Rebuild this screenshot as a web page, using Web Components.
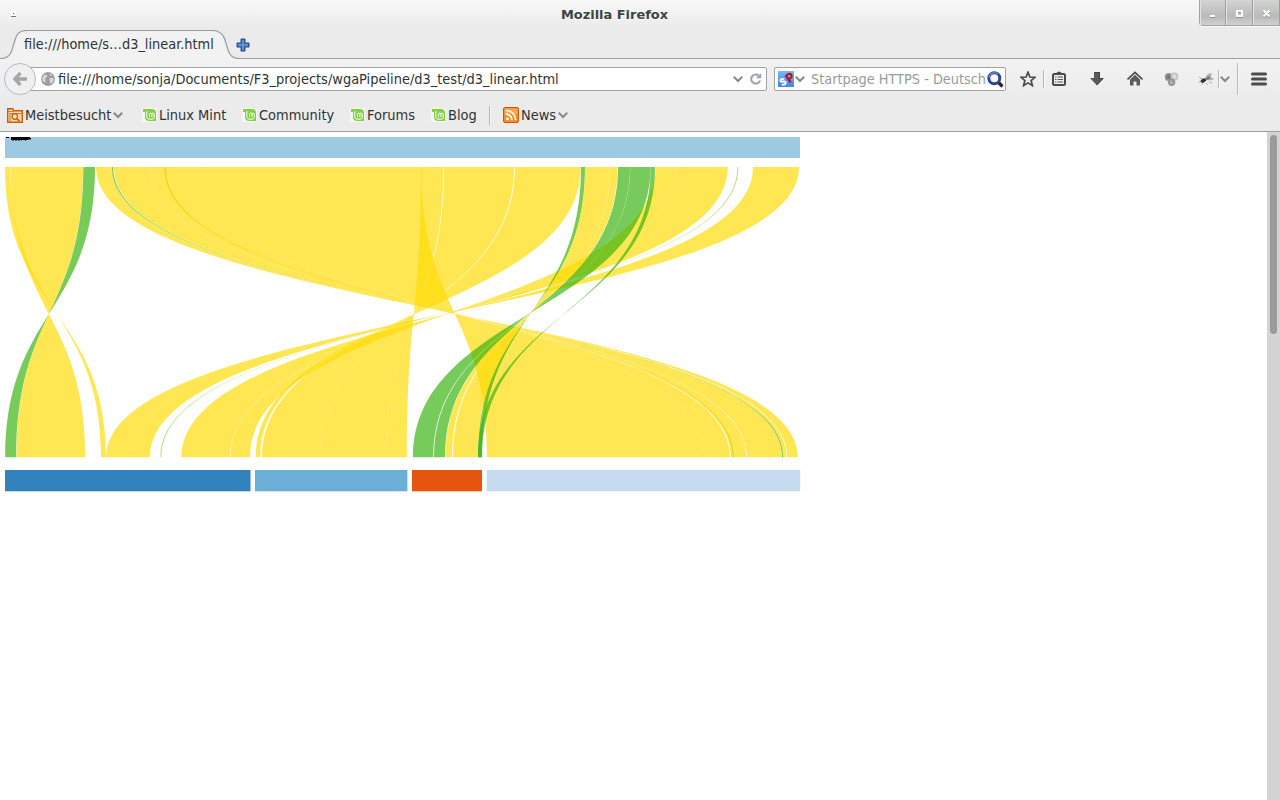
<!DOCTYPE html>
<html lang="de">
<head>
<meta charset="utf-8">
<title>Mozilla Firefox</title>
<style>
html,body{margin:0;height:100%;overflow:hidden}
body{font:14.45px/18px "DejaVu Sans Condensed","DejaVu Sans",sans-serif;color:#2e3436;background:#ebebeb}
</style>
</head>
<body>
<browser-window>
  <title-bar>Mozilla Firefox</title-bar>
  <tab-strip>file:///home/s…d3_linear.html</tab-strip>
  <nav-bar></nav-bar>
  <bookmark-bar>
    <bookmark-item icon="folder" menu style="--label:88px;margin-right:19px">Meistbesucht</bookmark-item>
    <bookmark-item icon="mint" style="--label:69px;margin-right:14px">Linux Mint</bookmark-item>
    <bookmark-item icon="mint" style="--label:76px;margin-right:15px">Community</bookmark-item>
    <bookmark-item icon="mint" style="--label:49px;margin-right:15px">Forums</bookmark-item>
    <bookmark-item icon="mint" style="--label:30px;margin-right:11px">Blog</bookmark-item>
    <bar-line style="--h:19px;margin-right:13px"></bar-line>
    <bookmark-item icon="rss" menu style="--gap:2px;--label:37px">News</bookmark-item>
  </bookmark-bar>
  <page-view><linear-chart></linear-chart></page-view>
</browser-window>
<script>
const ICONS = {
  folder: [16,16,`<path d="M.7 15.3V1.7h5l1 2h8.600v11.600z" fill="#f9d9b6" stroke="#ce5c00" stroke-width="1.400"/><path d="M1 4.500h6M3 15V6.500h12" fill="none" stroke="#e07b28" stroke-width="1.200"/><circle cx="7.800" cy="9.600" r="2.700" fill="#fff0dd" stroke="#ce5c00" stroke-width="1.300"/><path d="M9.800 11.800l2.700 2.400" stroke="#ce5c00" stroke-width="1.700"/>`],
  mint: [15,14,`<path d="M0 0h15v14H0z" fill="#f6f6f6"/><path d="M1 1h9c2.500 0 4 1.500 4 3.800V13H7.200c-2.700 0-4.200-1.500-4.200-4V4H1z" fill="#86cf43"/><path d="M4.800 3.200v5.500c0 1.500.8 2.400 2.200 2.400h3c1.500 0 2.200-.8 2.200-2.200V6.300c0-1.700-2.300-1.700-2.300 0v2.800M9.900 6.300c0-1.700-2.400-1.700-2.400 0v2.800" fill="none" stroke="#fff" stroke-width="1"/>`],
  rss: [16,16,`<rect x=".5" y=".5" width="15" height="15" rx="1.500" fill="#f78b1f" stroke="#d45500"/><path d="M1.500 1.500h13v6q-6-2-13 1z" fill="#fba64b"/><circle cx="4.500" cy="11.700" r="1.500" fill="#fff"/><path d="M3 7.200a6 6 0 0 1 6 6M3 3.500a9.700 9.700 0 0 1 9.700 9.700" fill="none" stroke="#fff" stroke-width="1.700"/>`],
  chevron: [10,8,`<path d="M.8 1.800L5 6l4.200-4.200" fill="none" stroke="#888a86" stroke-width="2"/>`],
  globe: [14,14,`<circle cx="7" cy="7" r="6.900" fill="#9e9e9e"/><path d="M1.500 5l2.500-2.500 2 .5.300 1.500L4 6.500l.8 2.500-1 1.500Q1.500 9.500 1.300 7zM8.500 1.500l3 1.500-2 1zM8.300 6.500l3.500-.800 1 1.800-1.300 3-1.700 1.200-1-2.500z" fill="#dadada"/>`],
  reload: [12,12,`<path d="M10 7.500A4.500 4.500 0 1 1 8.600 2.600" fill="none" stroke="#97a3b2" stroke-width="2"/><path d="M11.200 0v5.300H5.900z" fill="#97a3b2"/>`],
  search: [17,17,`<path d="M11 11l4.500 4.500" stroke="#222" stroke-width="3.200"/><circle cx="7.300" cy="7.300" r="5.500" fill="#f4f6fb" stroke="#2c4595" stroke-width="3"/><path d="M2 7a5.400 5.400 0 0 1 9-4" fill="none" stroke="#6a8ad0" stroke-width="1.200"/>`],
  star: [16,16,`<path d="M8 1.200l1.900 4.800 5.100.300-3.900 3.300 1.300 5L8 11.900l-4.400 2.700 1.300-5L1 6.300 6.100 6z" fill="none" stroke="#4a4a4a" stroke-width="1.700"/>`],
  list: [16,16,`<path d="M5 3Q5.500.500 8 .5T11 3z" fill="#4d4d4d"/><rect x="2" y="3" width="12" height="11" rx="1.300" fill="none" stroke="#4a4a4a" stroke-width="2"/><path d="M4 6h1.500M6.500 6h5.500M4 8.500h1.500M6.500 8.500h5.500M4 11h1.500M6.500 11h5.500" stroke="#555" stroke-width="1.200"/>`],
  down: [16,16,`<path d="M5 1h6v6h4l-7 7.500L1 7h4z" fill="#595959"/><path d="M5.500 1.500h5v6h3.300L8 13.800" fill="none" stroke="#444"/>`],
  home: [16,16,`<path d="M.5 8.500L8 1.500l7.500 7" fill="none" stroke="#4b4b4b" stroke-width="1.700"/><path d="M3 8.500l5-4.700 5 4.700V14.500H9.500v-4h-3v4H3z" fill="#5c5c5c"/>`],
  balls: [15,15,`<circle cx="4.800" cy="5" r="4" fill="#8f8f8f"/><circle cx="10.400" cy="4.500" r="4" fill="#c3c3c3"/><circle cx="7.600" cy="10.300" r="3.700" fill="#969696"/><circle cx="4.800" cy="5" r="2" fill="#777"/><circle cx="10.500" cy="4.400" r="2" fill="#ddd"/><circle cx="7.500" cy="10.500" r="1.800" fill="#b0b0b0"/>`],
  fly: [17,15,`<path d="M8 7q-1-5 5-6 3 3-5 6zM9 8q5-4 7-1-2 2-7 1z" fill="#b5b5b5"/><path d="M1 5l4 2.500M.5 10l4-.500M4 13l1-3M8 11l2 2M11 9.500l3 2" stroke="#a5a5a5" stroke-width=".9"/><ellipse cx="5.500" cy="8.500" rx="3" ry="1.900" transform="rotate(-25 5.500 8.500)" fill="#333"/><ellipse cx="10" cy="6.200" rx="3" ry="1.500" transform="rotate(-25 10 6.200)" fill="#7c7c7c"/>`],
  menu: [16,14,`<path d="M1.500 2h13M1.500 7h13M1.500 12h13" stroke="#4c4c4c" stroke-width="3" stroke-linecap="round"/>`],
  engine: [16,16,`<defs><linearGradient id="e" y2="1" x2="0"><stop stop-color="#79b8f8"/><stop offset="1" stop-color="#3d87ef"/></linearGradient></defs><path d="M0 0h16v16H0z" fill="url(#e)"/><path d="M6.200 8.200C4 7.200 1.800 9 2.800 10.300c1 1.200 3.700-.6 4.700.8.800 1.500-1.200 3.300-3.700 2.300" fill="none" stroke="#fff" stroke-width="1.900"/><path d="M7.500 4.500l5.300 7M8 5.200c1-2.200 4-3.200 5.200-1.600 1.200 1.700-.2 3.900-2.700 4.600" fill="none" stroke="#b8141c" stroke-width="2.200"/>`],
  plus: [14,14,`<path d="M5.200 1.200h3.600v4h4v3.600h-4v4H5.200v-4h-4V5.200h4z" fill="#5f93d0" stroke="#204a87" stroke-width="1.300" stroke-linejoin="round"/>`],
  back: [14,14,`<path d="M7.500 1L1.800 7l5.700 6M2 7h12" fill="none" stroke="#a6a6a6" stroke-width="3.400"/>`]
};
const define = (name, css, html) => customElements.define(name, class extends HTMLElement {
  constructor(){ super(); this.attachShadow({mode:'open'}); }
  connectedCallback(){ this.shadowRoot.innerHTML = `<style>${css}</style>` + (typeof html === 'function' ? html(this) : html); }
});

define('ui-icon', `:host{display:block;flex:none}svg{display:block}`, el => {
  const [w,h,body] = ICONS[el.getAttribute('name')];
  return `<svg width="${w}" height="${h}" viewBox="0 0 ${w} ${h}">${body}</svg>`;
});
define('bar-line', `:host{display:block;flex:none;width:1px;height:var(--h,18px);background:#b8b8b8;box-shadow:1px 0 #f8f8f8}`, '');
define('browser-window', `:host{display:flex;flex-direction:column;height:800px;width:1280px;background:linear-gradient(#f8f8f8,#ebebeb 28px)}`, '<slot></slot>');

define('title-bar', `
:host{display:grid;grid-template-columns:80px 1fr 81px;height:30px;flex:none}
.dot{width:5px;height:6px;background:#fff;border-bottom:1px solid #777;margin:10px 0 0 11px;display:grid;place-items:center}
.dot i{width:1px;height:1px;background:#555}
.name{text-align:center;font:bold 12.95px/18px "DejaVu Sans",sans-serif;color:#3d4344;text-shadow:0 1px #fff;padding:6px 50px 0 0}
.buttons{display:grid;grid-template-columns:26px 27px 1fr;height:26px;background:linear-gradient(#d3d4d3,#b9bbb9 65%,#cfd0cf);border:1px solid #a2a4a2;border-width:0 0 1px 1px;border-radius:0 0 0 4px;box-shadow:0 1px #fafafa;box-sizing:border-box}
.buttons span{border-left:1px solid #e2e3e2;border-right:1px solid #9fa19f}
svg{display:block;width:100%;height:25px}`,
`<div class="dot"><i></i></div><div class="name"><slot></slot></div>
<div class="buttons"><span><svg viewBox="0 0 24 25"><path d="M9 17h5" stroke="#8d8f8d" stroke-width="2"/><path d="M9 16h5" stroke="#fff" stroke-width="2"/></svg></span>
<span><svg viewBox="0 0 25 25"><path d="M10 12h5v5h-5z" fill="none" stroke="#8d8f8d" stroke-width="2"/><path d="M10 11h5v5h-5z" fill="none" stroke="#fff" stroke-width="2"/></svg></span>
<span><svg viewBox="0 0 24 25"><path d="M9 11.500l6 6m0-6l-6 6" stroke="#8d8f8d" stroke-width="2"/><path d="M9 10.500l6 6m0-6l-6 6" stroke="#fff" stroke-width="2"/></svg></span></div>`);

define('tab-strip', `
:host{display:flex;height:29px;flex:none;background:linear-gradient(#a0a0a0,#a0a0a0) bottom/100% 1px no-repeat}
.tab{display:grid;width:237px}
.tab>*{grid-area:1/1}
.label{padding:5px 0 0 24px;white-space:nowrap;font-size:14.4px}
ui-icon{margin-top:8px;margin-left:-1px}`,
`<div class="tab"><svg width="240" height="29"><path d="M0 28.500C7 28.500 10 26 12 20L15 10C17 3 20 .5 27 .5H212C219 .5 223 3 225 10L228 20C230 26 233 28.500 240 28.500V30H0z" fill="#f2f2f2"/><path d="M0 28.500C7 28.500 10 26 12 20L15 10C17 3 20 .5 27 .5H212C219 .5 223 3 225 10L228 20C230 26 233 28.500 240 28.500" fill="none" stroke="#9b9b9b" stroke-width="1.200"/></svg><div class="label"><slot></slot></div></div><ui-icon name="plus"></ui-icon>`);

define('nav-bar', `
:host{display:flex;align-items:center;height:40px;flex:none;background:linear-gradient(#f2f2f2,#ebebeb)}
.back{width:32px;height:32px;box-sizing:border-box;border:1px solid #b5bcc4;border-radius:50%;background:#f0f0f0;margin-left:4px;display:grid;place-items:center;z-index:1}
.field{display:flex;align-items:center;height:24px;box-sizing:border-box;background:#fff;border:1px solid #a2a2a2;border-radius:2px;white-space:nowrap}
.url{width:743px;margin:0 7px 0 -12px;padding-left:16px;box-sizing:border-box}
.url span{flex:1;padding-left:3px}
.find{width:232px;padding-left:3px;color:#999b99}
.find span{width:176px;margin-left:6px;font-size:14.35px}`,
`<div class="back"><ui-icon name="back"></ui-icon></div>
<div class="field url"><ui-icon name="globe"></ui-icon><span>file:///home/sonja/Documents/F3_projects/wgaPipeline/d3_test/d3_linear.html</span><ui-icon name="chevron" style="margin-right:7px"></ui-icon><ui-icon name="reload" style="margin-right:4px"></ui-icon></div>
<div class="field find"><ui-icon name="engine"></ui-icon><ui-icon name="chevron" style="margin-left:1px"></ui-icon><span>Startpage HTTPS - Deutsch</span><ui-icon name="search"></ui-icon></div>
<ui-icon name="star" style="margin:0 7px 0 14px"></ui-icon><bar-line></bar-line>
<ui-icon name="list" style="margin-left:7px"></ui-icon><ui-icon name="down" style="margin-left:22px"></ui-icon>
<ui-icon name="home" style="margin-left:22px"></ui-icon><ui-icon name="balls" style="margin-left:21px"></ui-icon>
<ui-icon name="fly" style="margin-left:19px"></ui-icon><bar-line style="--h:18px;margin-left:3px"></bar-line><ui-icon name="chevron" style="margin-left:1px"></ui-icon>
<bar-line style="--h:32px;margin-left:7px"></bar-line><ui-icon name="menu" style="margin-left:13px"></ui-icon>`);

define('bookmark-bar', `:host{display:flex;align-items:center;height:33px;box-sizing:border-box;border-bottom:1px solid #9f9f9f;padding-left:7px;flex:none}`, '<slot></slot>');
define('bookmark-item', `:host{display:flex;align-items:center;white-space:nowrap}span{margin-left:var(--gap,2px);width:var(--label)}`,
 el => `<ui-icon name="${el.getAttribute('icon')}"></ui-icon><span><slot></slot></span>${el.hasAttribute('menu')?'<ui-icon name="chevron"></ui-icon>':''}`);

define('page-view', `
:host{display:flex;flex:1;background:#fff;min-height:0}
.content{flex:1;padding:5px}
.scroll{width:13px;background:#d3d3d3;padding:3px;box-sizing:border-box}
.thumb{width:7px;height:199px;border-radius:4px;background:#999a99}`,
`<div class="content"><slot></slot></div><div class="scroll"><div class="thumb"></div></div>`);

const Y = '#ffdb00', G = '#33b209', OLIVE = '#d0d200', PALE = '#83c832';
/* Each ribbon: colour, source start/end on the upper axis, target start/end on the lower axis. */
const RIBBONS = [
  [Y,5,10.4,106,101],[Y,10.6,83,85.3,16.600],[G,83.3,95,16.300,5.300],
  [Y,96,107.6,797.7,787.3],[Y,107.6,112,786.6,783.1],[G,111.900,113.100,783.1,782],[Y,113.8,150.3,782,747],
  [Y,150.4,165.5,746.4,732.6],[OLIVE,164.2,165.700,733.9,732.400],[Y,165.5,193.3,732.6,730.9],[Y,165.5,193.3,730.1,704.5],[Y,193.3,421.2,704.5,487],
  [Y,421,443.4,407,386],[Y,444,514,386,320],[Y,514.9,576.3,320,262],[Y,576.3,580.8,260.3,255.7],
  [Y,655.5,676.6,250,230.5],[Y,676.6,727.7,230.1,181.4],[Y,753,799,150,106.3],
  [G,581,585,482,478],[Y,585,610,478,453],[Y,610.2,617.4,452,445.5],
  [G,618,630,445,434],[G,630.2,650.6,433.3,413],[G,650.7,655,482,478],
  [PALE,737.500,738.4,161.2,160.3]
];
/* The narrow run after the olive line only spans the strip between it and the next ribbon. */
RIBBONS[9] = [Y,165.5,165.6,732.6,730.9];
define('linear-chart', `:host{display:block}svg{display:block}`, () => {
  const paths = RIBBONS.map(([c,a,b,d,e]) => `<path fill="${c}" d="M${a} 167C${a} 312 ${d} 312 ${d} 457.300L${e} 457.300C${e} 312 ${b} 312 ${b} 167Z"/>`).join('');
  return `<svg width="800" height="360" viewBox="5 137 800 360">
<rect x="5" y="137" width="795" height="21" fill="#9ecae1"/>
<g fill-opacity=".67">${paths}</g>
<g><rect x="5" y="470" width="245.500" height="21.300" fill="#3182bd"/><rect x="255" y="470" width="152.400" height="21.300" fill="#6baed6"/><rect x="412" y="470" width="70" height="21.300" fill="#e6550d"/><rect x="486.600" y="470" width="313.600" height="21.300" fill="#c6dbef"/></g>
<path d="M6 137h3v1h-3zM11 137h19v1h1v1.500h-3v.500h-2v.5h-1v-.5h-3v.5h-1v-.5h-1v.5h-2v-.5h-1v.5h-2v-.5h-1v.5h-2v-.5h-1z" fill="#000"/></svg>`;
});
</script>
</body>
</html>
